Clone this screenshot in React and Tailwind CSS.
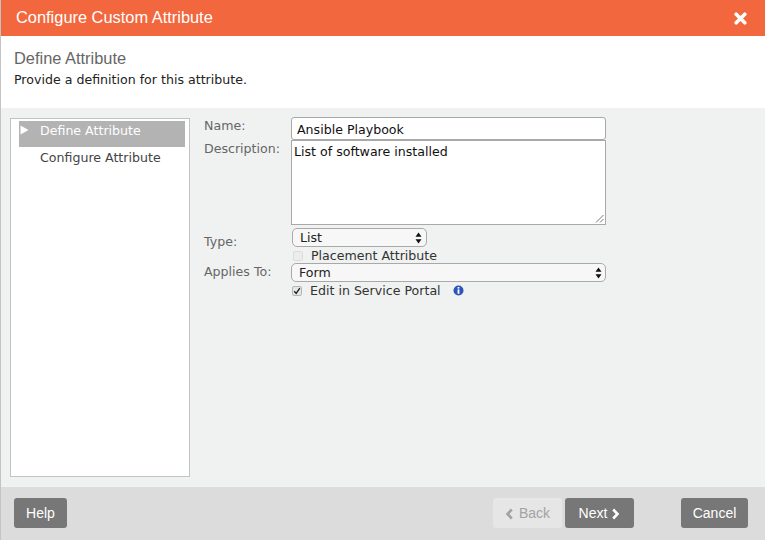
import React from "react";

const dejavu = "font-['DejaVu_Sans',sans-serif]";

function Updown() {
  return (
    <svg width="7" height="12" viewBox="0 0 7 12" className="shrink-0">
      <path d="M3.5 0.5 L6.5 4.8 H0.5 Z M0.5 7.2 H6.5 L3.5 11.5 Z" fill="#111" />
    </svg>
  );
}

function Select({ label, className }) {
  return (
    <div className={`rounded-[5px] border border-[#a9a9a9] bg-[#f7f7f7] flex items-center justify-between text-[#222] ${className}`}>
      <span className="pt-[1px]">{label}</span>
      <Updown />
    </div>
  );
}

function Btn({ children, className = "" }) {
  return (
    <div className={`h-[30px] rounded-[3px] flex items-center justify-center pt-[1px] text-[14px] font-['Liberation_Sans',sans-serif] ${className}`}>
      {children}
    </div>
  );
}

export default function App() {
  return (
    <div className={`w-[765px] h-[540px] flex flex-col overflow-hidden bg-white border-l border-[#c4c4c4] ${dejavu}`}>
      <div className="h-[36px] shrink-0 bg-[#f2673d] flex items-center justify-between pl-[15px] pr-[18px]">
        <span className="text-white text-[16.4px] pb-[2px] font-['Liberation_Sans',sans-serif]">Configure Custom Attribute</span>
        <svg width="13" height="13" viewBox="0 0 13 13">
          <path d="M2.2 2.2 L10.8 10.8 M10.8 2.2 L2.2 10.8" stroke="#fff" strokeWidth="3.6" strokeLinecap="round" />
        </svg>
      </div>

      <div className="h-[72px] shrink-0 bg-white pl-[13px] pt-[12px]">
        <div className="text-[16.4px] leading-[20px] text-[#666] font-['Liberation_Sans',sans-serif]">Define Attribute</div>
        <div className="text-[12.6px] leading-[16px] mt-[4px] text-[#222]">Provide a definition for this attribute.</div>
      </div>

      <div className="flex-1 bg-[#f0f2f2] flex pl-[9px] pt-[10px] pb-[10px]">
        <div className="w-[180px] shrink-0 bg-white border border-[#c0c4c4] pt-[2px] pl-[8px] pr-[4px] text-[12.6px] leading-[16px]">
          <div className="h-[26px] bg-[#b3b3b3] text-white relative pl-[21px] pt-[2px]">
            <svg width="9" height="10" viewBox="0 0 9 10" className="absolute left-[1px] top-[4px]">
              <path d="M0.5 0.5 L8.5 5 L0.5 9.5 Z" fill="#fff" />
            </svg>
            Define Attribute
          </div>
          <div className="h-[26px] text-[#444] pl-[21px] pt-[2px] mt-[1px]">Configure Attribute</div>
        </div>

        <div className="ml-[14px] -mt-[1px] w-[402px] text-[12.6px]">
          <div className="flex h-[23px]">
            <div className="w-[87px] text-[#666] leading-[16px] pt-[1px]">Name:</div>
            <div className="w-[315px] h-[23px] rounded-[3px] border border-[#a9a9a9] bg-white pl-[5px] leading-[23px] text-[#111]">Ansible Playbook</div>
          </div>
          <div className="flex">
            <div className="w-[87px] text-[#666] leading-[16px] pt-[1px]">Description:</div>
            <div className="relative w-[315px] h-[85px] border border-[#a9a9a9] bg-white pl-[2px] pt-[3px] leading-[16px] text-[#111]">
              List of software installed
              <svg width="9" height="9" viewBox="0 0 9 9" className="absolute right-[1px] bottom-[1px]">
                <path d="M8.5 1 L1 8.5 M8.5 5 L5 8.5" stroke="#777" strokeWidth="1" />
              </svg>
            </div>
          </div>

          <div className="flex h-[19px] mt-[3px]">
            <div className="w-[88px] text-[#666] leading-[16px] pt-[6px]">Type:</div>
            <Select label="List" className="w-[135px] pl-[7px] pr-[4px] h-[19px]" />
          </div>
          <div className="flex items-center h-[16px] pl-[89px] pt-[2px]">
            <div className="w-[10px] h-[10px] rounded-[2px] border border-[#dcdcdc] bg-[#ececec]" />
            <span className="ml-[8px] text-[#333]">Placement Attribute</span>
          </div>
          <div className="flex h-[19px]">
            <div className="w-[87px] text-[#666] leading-[16px] pt-[1px]">Applies To:</div>
            <Select label="Form" className="w-[315px] pl-[7px] pr-[3px] h-[19px]" />
          </div>
          <div className="flex items-center h-[16px] pl-[88px] pt-[2px]">
            <div className="w-[10px] h-[10px] rounded-[2px] border border-[#b5b5b5] bg-[#e6e6e6] flex items-center justify-center">
              <svg width="8" height="8" viewBox="0 0 8 8">
                <path d="M1.2 4.2 L3.2 6.4 L6.8 1.2" stroke="#222" strokeWidth="1.4" fill="none" />
              </svg>
            </div>
            <span className="ml-[8px] text-[#333]">Edit in Service Portal</span>
            <svg width="11" height="11" viewBox="0 0 11 11" className="ml-[12px] -mt-[2px]">
              <circle cx="5.5" cy="5.5" r="5" fill="#2b55b8" />
              <rect x="4.6" y="2" width="1.8" height="1.6" fill="#fff" />
              <rect x="4.6" y="4.4" width="1.8" height="4.4" fill="#fff" />
            </svg>
          </div>
        </div>
      </div>

      <div className="h-[53px] shrink-0 bg-[#dcdcdc] flex items-center pl-[13px] pr-[16px] pb-[1px]">
        <Btn className="w-[53px] bg-[#777] text-white">Help</Btn>
        <Btn className="w-[69px] ml-[426px] bg-[#e6e6e6] text-[#a3a3a3] gap-[5px]">
          <svg width="9" height="12" viewBox="0 0 9 12"><path d="M6.8 1.5 L2.5 6 L6.8 10.5" stroke="#a3a3a3" strokeWidth="2.6" fill="none" /></svg>
          Back
        </Btn>
        <Btn className="w-[69px] ml-[3px] bg-[#777] text-white gap-[4px]">
          Next
          <svg width="9" height="12" viewBox="0 0 9 12"><path d="M2.2 1.5 L6.5 6 L2.2 10.5" stroke="#fff" strokeWidth="2.6" fill="none" /></svg>
        </Btn>
        <Btn className="w-[67px] ml-[47px] bg-[#777] text-white">Cancel</Btn>
      </div>
    </div>
  );
}
